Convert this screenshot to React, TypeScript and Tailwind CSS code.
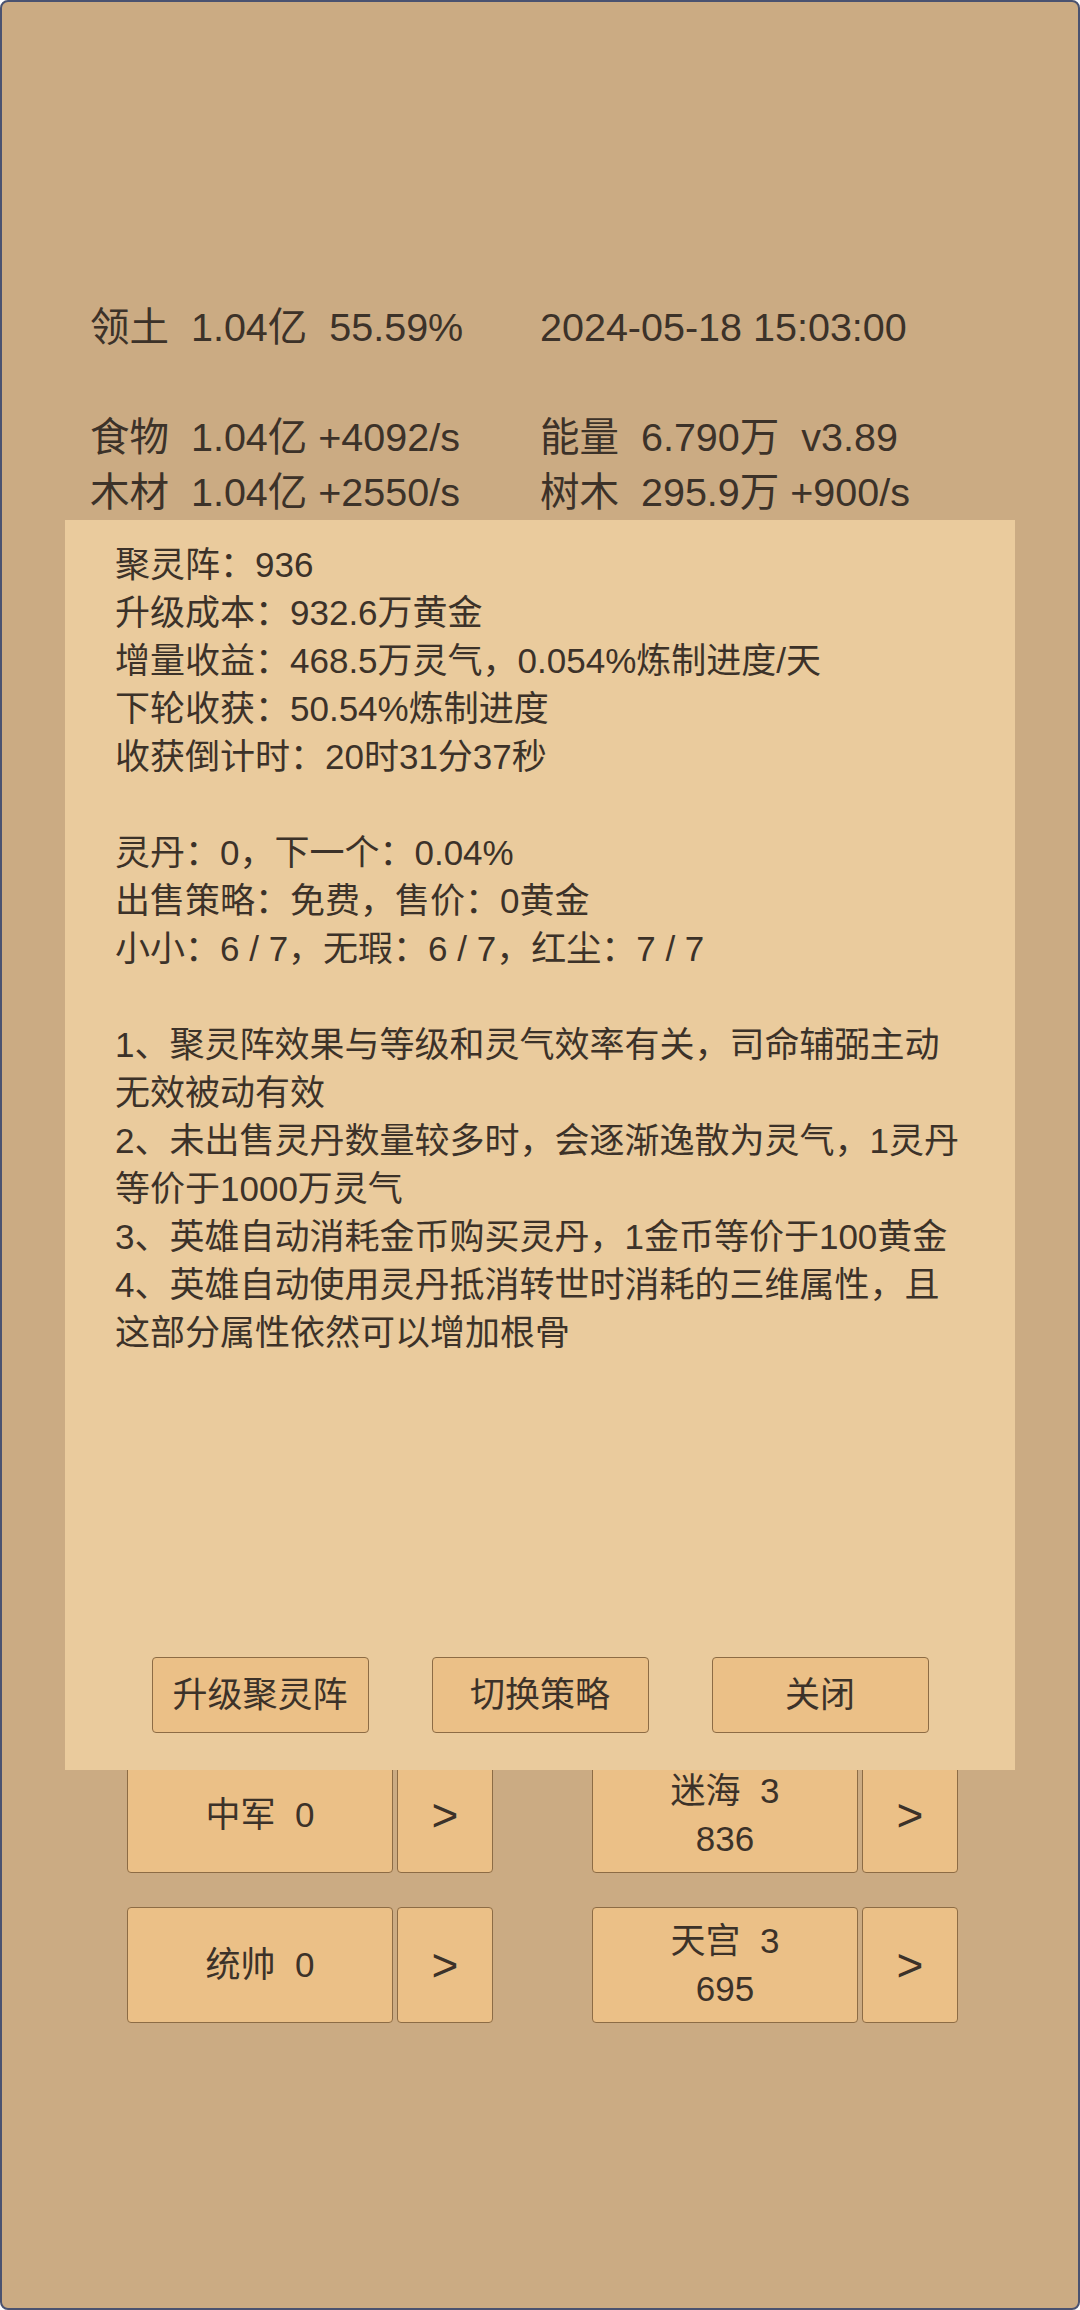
import React from "react";

const FONT = '"Liberation Sans", "Noto Sans CJK SC", sans-serif';

function StatRow({ left, right }: { left: string; right: string }) {
  return (
    <div className="flex h-[55px] items-center whitespace-pre">
      <div className="w-[450px]">{left}</div>
      <div>{right}</div>
    </div>
  );
}

function NavGroup({ lines }: { lines: string[] }) {
  return (
    <div className="flex gap-[4px]">
      <div className="flex h-[116px] w-[266px] flex-col items-center justify-center rounded-[4px] border border-[#8d6c45] bg-[#EBC087] text-[35px] leading-[48px] whitespace-pre">
        {lines.map((l, i) => (
          <div key={i}>{l}</div>
        ))}
      </div>
      <div className="flex h-[116px] w-[96px] items-center justify-center rounded-[4px] border border-[#8d6c45] bg-[#EBC087] text-[46px]">
        &gt;
      </div>
    </div>
  );
}

const panelLines = [
  "聚灵阵：936",
  "升级成本：932.6万黄金",
  "增量收益：468.5万灵气，0.054%炼制进度/天",
  "下轮收获：50.54%炼制进度",
  "收获倒计时：20时31分37秒",
  "",
  "灵丹：0，下一个：0.04%",
  "出售策略：免费，售价：0黄金",
  "小小：6 / 7，无瑕：6 / 7，红尘：7 / 7",
  "",
  "1、聚灵阵效果与等级和灵气效率有关，司命辅弼主动无效被动有效",
  "2、未出售灵丹数量较多时，会逐渐逸散为灵气，1灵丹等价于1000万灵气",
  "3、英雄自动消耗金币购买灵丹，1金币等价于100黄金",
  "4、英雄自动使用灵丹抵消转世时消耗的三维属性，且这部分属性依然可以增加根骨",
];

export default function App() {
  return (
    <div
      className="relative h-[2310px] w-[1080px] overflow-hidden rounded-[8px] border-2 border-[#4a5270] bg-[#CBAB83] text-[#3C3229]"
      style={{ fontFamily: FONT }}
    >
      <div className="pl-[88px] pt-[298px] text-[39.5px]">
        <StatRow left="领土  1.04亿  55.59%" right="2024-05-18 15:03:00" />
        <div className="h-[55px]" />
        <StatRow left="食物  1.04亿 +4092/s" right="能量  6.790万  v3.89" />
        <StatRow left="木材  1.04亿 +2550/s" right="树木  295.9万 +900/s" />
      </div>

      <div className="mt-[1237px] flex flex-col gap-[34px] pl-[125px]">
        <div className="flex gap-[99px]">
          <NavGroup lines={["中军  0"]} />
          <NavGroup lines={["迷海  3", "836"]} />
        </div>
        <div className="flex gap-[99px]">
          <NavGroup lines={["统帅  0"]} />
          <NavGroup lines={["天宫  3", "695"]} />
        </div>
      </div>

      <div className="absolute left-[63px] top-[518px] flex h-[1250px] w-[950px] flex-col bg-[#EACB9D] px-[50px] pb-[37px] pt-[21px]">
        <div className="text-[35px] leading-[48px] whitespace-pre-wrap">
          {panelLines.map((l, i) => (
            <div key={i} className="min-h-[48px]">
              {l}
            </div>
          ))}
        </div>
        <div className="mt-auto flex justify-center gap-[63px]">
          {["升级聚灵阵", "切换策略", "关闭"].map((t) => (
            <div
              key={t}
              className="flex h-[76px] w-[217px] items-center justify-center rounded-[4px] border border-[#8d6c45] bg-[#EBC087] text-[35px]"
            >
              {t}
            </div>
          ))}
        </div>
      </div>
    </div>
  );
}
